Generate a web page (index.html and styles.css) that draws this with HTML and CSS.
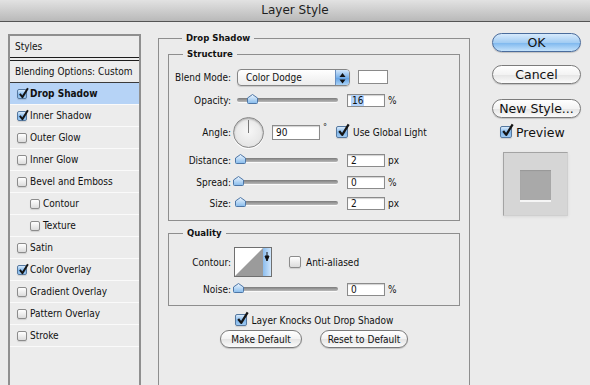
FILE: index.html
```html
<!DOCTYPE html>
<html lang="en">
<head>
    <meta charset="UTF-8">
    <title>Layer Style</title>
    <link rel="stylesheet" href="styles.css">
</head>
<body>
    <svg class="defs" width="0" height="0">
        <defs>
            <linearGradient id="thumbFill" x1="0" y1="0" x2="0" y2="1">
                <stop offset="0" stop-color="#eef6fe"/>
                <stop offset="1" stop-color="#86bbec"/>
            </linearGradient>
        </defs>
    </svg>

    <div class="titlebar">Layer Style</div>

    <div class="dialog">
        <!-- styles list -->
        <div class="styles-list">
            <div class="list-head">Styles</div>
            <div class="list-blend">Blending Options: Custom</div>
            <div class="item selected"><span class="cb on"><svg class="tick" width="11" height="12" viewBox="0 0 12 13"><path d="M2 7.5 L4.8 11 L10.8 1.2"/></svg></span><b>Drop Shadow</b></div>
            <div class="item"><span class="cb on"><svg class="tick" width="11" height="12" viewBox="0 0 12 13"><path d="M2 7.5 L4.8 11 L10.8 1.2"/></svg></span>Inner Shadow</div>
            <div class="item"><span class="cb"></span>Outer Glow</div>
            <div class="item"><span class="cb"></span>Inner Glow</div>
            <div class="item"><span class="cb"></span>Bevel and Emboss</div>
            <div class="item sub"><span class="cb"></span>Contour</div>
            <div class="item sub"><span class="cb"></span>Texture</div>
            <div class="item"><span class="cb"></span>Satin</div>
            <div class="item"><span class="cb on"><svg class="tick" width="11" height="12" viewBox="0 0 12 13"><path d="M2 7.5 L4.8 11 L10.8 1.2"/></svg></span>Color Overlay</div>
            <div class="item"><span class="cb"></span>Gradient Overlay</div>
            <div class="item"><span class="cb"></span>Pattern Overlay</div>
            <div class="item"><span class="cb"></span>Stroke</div>
        </div>

        <!-- drop shadow settings -->
        <fieldset class="group group-main">
            <legend>Drop Shadow</legend>

            <fieldset class="group group-sub structure">
                <legend>Structure</legend>
                <div class="row row-blend">
                    <span class="lbl">Blend Mode:</span>
                    <div class="select">
                        <span class="select-value">Color Dodge</span>
                        <span class="select-arrows"><svg width="13" height="16" viewBox="0 0 13 16"><path d="M3.5 7 L6.5 3 L9.5 7 Z M3.5 9.5 L6.5 13.5 L9.5 9.5 Z"/></svg></span>
                    </div>
                    <span class="color-swatch"></span>
                </div>
                <div class="row row-opacity">
                    <span class="lbl">Opacity:</span>
                    <div class="slider"><span class="thumb" style="left: 10px"><svg width="11" height="10" viewBox="0 0 11 10"><path d="M5.5 .5 L10.5 4 V8.5 Q10.5 9.5 9.5 9.5 H1.5 Q.5 9.5 .5 8.5 V4 Z"/></svg></span></div>
                    <span class="field"><span class="hl">16</span></span>
                    <span class="unit">%</span>
                </div>
                <div class="row row-angle">
                    <span class="lbl">Angle:</span>
                    <span class="dial"></span>
                    <span class="field field-angle">90</span>
                    <span class="deg">°</span>
                    <span class="cb cb-big on"><svg class="tick" width="13" height="14" viewBox="0 0 12 13"><path d="M2 7.5 L4.8 11 L10.8 1.2"/></svg></span>
                    <span class="cb-text">Use Global Light</span>
                </div>
                <div class="row row-distance">
                    <span class="lbl">Distance:</span>
                    <div class="slider"><span class="thumb" style="left: -2px"><svg width="11" height="10" viewBox="0 0 11 10"><path d="M5.5 .5 L10.5 4 V8.5 Q10.5 9.5 9.5 9.5 H1.5 Q.5 9.5 .5 8.5 V4 Z"/></svg></span></div>
                    <span class="field">2</span>
                    <span class="unit">px</span>
                </div>
                <div class="row row-spread">
                    <span class="lbl">Spread:</span>
                    <div class="slider"><span class="thumb" style="left: -4px"><svg width="11" height="10" viewBox="0 0 11 10"><path d="M5.5 .5 L10.5 4 V8.5 Q10.5 9.5 9.5 9.5 H1.5 Q.5 9.5 .5 8.5 V4 Z"/></svg></span></div>
                    <span class="field">0</span>
                    <span class="unit">%</span>
                </div>
                <div class="row row-size">
                    <span class="lbl">Size:</span>
                    <div class="slider"><span class="thumb" style="left: -2px"><svg width="11" height="10" viewBox="0 0 11 10"><path d="M5.5 .5 L10.5 4 V8.5 Q10.5 9.5 9.5 9.5 H1.5 Q.5 9.5 .5 8.5 V4 Z"/></svg></span></div>
                    <span class="field">2</span>
                    <span class="unit">px</span>
                </div>
            </fieldset>

            <fieldset class="group group-sub quality">
                <legend>Quality</legend>
                <div class="row row-contour">
                    <span class="lbl">Contour:</span>
                    <div class="contour">
                        <svg class="contour-curve" width="28" height="28" viewBox="0 0 28 28"><rect width="28" height="28" fill="#fff"/><path d="M0 28 L28 0 V28 Z" fill="#9b9b9b"/></svg>
                        <span class="contour-arrow"><svg width="8" height="28" viewBox="0 0 8 28"><path d="M4 4 V9"/><path d="M2 8 H6 L4 13 Z"/></svg></span>
                    </div>
                    <span class="cb cb-big cb-anti"></span>
                    <span class="cb-text">Anti-aliased</span>
                </div>
                <div class="row row-noise">
                    <span class="lbl">Noise:</span>
                    <div class="slider"><span class="thumb" style="left: -4px"><svg width="11" height="10" viewBox="0 0 11 10"><path d="M5.5 .5 L10.5 4 V8.5 Q10.5 9.5 9.5 9.5 H1.5 Q.5 9.5 .5 8.5 V4 Z"/></svg></span></div>
                    <span class="field">0</span>
                    <span class="unit">%</span>
                </div>
            </fieldset>

            <div class="knock">
                <span class="cb cb-big on"><svg class="tick" width="13" height="14" viewBox="0 0 12 13"><path d="M2 7.5 L4.8 11 L10.8 1.2"/></svg></span>
                <span class="cb-text">Layer Knocks Out Drop Shadow</span>
            </div>
            <div class="defaults">
                <button class="btn btn-small btn-make">Make Default</button>
                <button class="btn btn-small btn-reset">Reset to Default</button>
            </div>
        </fieldset>

        <!-- dialog buttons -->
        <div class="side">
            <button class="btn btn-big btn-ok">OK</button>
            <button class="btn btn-big btn-cancel">Cancel</button>
            <button class="btn btn-big btn-new">New Style...</button>
            <div class="preview">
                <span class="cb cb-big on"><svg class="tick" width="13" height="14" viewBox="0 0 12 13"><path d="M2 7.5 L4.8 11 L10.8 1.2"/></svg></span>
                <span>Preview</span>
            </div>
            <div class="preview-box"><span class="preview-square"></span></div>
        </div>
    </div>
</body>
</html>
```

FILE: styles.css
```css
body {
    margin: 0;
    width: 590px;
    height: 385px;
    overflow: hidden;
    background-color: #ebebeb;
    color: #111;
    font-family: "DejaVu Sans Condensed", "DejaVu Sans", sans-serif;
    font-size: 10px;
}
.defs {
    position: absolute;
}
.titlebar {
    height: 21px;
    line-height: 21px;
    text-align: center;
    font-family: "DejaVu Sans", sans-serif;
    font-size: 12px;
    color: #1e1e1e;
    background: linear-gradient(#e2e2e2, #b9b9b9);
    border-bottom: 1px solid #555;
}
.dialog {
    display: flex;
    align-items: flex-start;
    padding-left: 8px;
}

/* styles list */
.styles-list {
    width: 133px;
    height: 351px;
    margin-top: 12px;
    box-sizing: border-box;
    border: 2px solid #8f8f8f;
    border-bottom: none;
    background-color: #ececec;
}
.list-head,
.list-blend {
    height: 21px;
    line-height: 21px;
    padding-left: 5px;
}
.list-head {
    border-bottom: 4px double #1c1c1c;
}
.list-blend {
    border-bottom: 1px solid #3a3a3a;
}
.item {
    display: flex;
    align-items: center;
    gap: 3px;
    height: 21px;
    padding-left: 7px;
    border-bottom: 1px solid #fafafa;
}
.item.sub {
    padding-left: 20px;
}
.item.selected {
    background-color: #b6d3f6;
}

/* checkboxes */
.cb {
    position: relative;
    flex: none;
    width: 10px;
    height: 10px;
    box-sizing: border-box;
    border: 1px solid #8c8c8c;
    border-radius: 2px;
    background: linear-gradient(#ffffff, #dcdcdc);
    box-shadow: 0 1px 1px rgba(0, 0, 0, 0.12);
}
.cb.on {
    border-color: #55789f;
    background: linear-gradient(#d9ebfc, #7fb5ea 55%, #9fcaf2);
}
.cb-big {
    width: 12px;
    height: 12px;
}
.tick {
    position: absolute;
    left: 0;
    top: -3px;
}
.tick path {
    fill: none;
    stroke: #151515;
    stroke-width: 2.1;
    stroke-linejoin: round;
}
.cb-big .tick {
    top: -4px;
}
.cb-text {
    margin-left: 5px;
}

/* group boxes */
.group {
    margin: 0;
    padding: 0;
    min-width: 0;
    box-sizing: border-box;
    border: 1px solid #8e8e8e;
}
.group legend {
    margin-left: 14px;
    padding: 0 4px;
    line-height: 12px;
    font-weight: bold;
    font-size: 9.5px;
}
.group-main {
    width: 312px;
    height: 353px;
    margin-left: 17px;
    margin-top: 10px;
    padding: 4px 0 0 9px;
    border-bottom: none;
}
.group-sub {
    width: 292px;
}
.structure {
    padding: 8px 0 9px;
}
.quality {
    margin-top: 6px;
    padding: 8px 0 8px;
}

/* rows */
.row {
    display: flex;
    align-items: center;
    height: 16px;
}
.lbl {
    width: 62px;
    margin-right: 6px;
    text-align: right;
    flex: none;
}
.row-blend {
    height: 18px;
}
.row-opacity {
    margin-top: 6px;
}
.row-angle {
    height: 32px;
    margin-top: 8px;
}
.row-distance {
    margin-top: 4px;
}
.row-spread {
    margin-top: 6px;
}
.row-size {
    margin-top: 5px;
}
.row-contour {
    height: 30px;
}
.row-noise {
    margin-top: 4px;
}

/* pop-up menu */
.select {
    display: flex;
    width: 113px;
    height: 17px;
    box-sizing: border-box;
    border: 1px solid #858585;
    border-radius: 4px;
    overflow: hidden;
    background: linear-gradient(#ffffff, #ececec);
    box-shadow: 0 1px 1px rgba(0, 0, 0, 0.15);
}
.select-value {
    flex: 1;
    padding-left: 8px;
    line-height: 15px;
}
.select-arrows {
    width: 13px;
    border-left: 1px solid #6a8fbf;
    background: linear-gradient(#d2e6fa, #79b1ea 50%, #5e9ee2 51%, #a9d2f6);
}
.select-arrows svg {
    display: block;
}
.select-arrows path {
    fill: #111;
}
.color-swatch {
    width: 30px;
    height: 14px;
    margin-left: 8px;
    box-sizing: border-box;
    border: 1px solid #8a8a8a;
    background-color: #fff;
}

/* sliders */
.slider {
    position: relative;
    width: 101px;
    height: 4px;
    margin-right: 9px;
    border-radius: 3px;
    background: linear-gradient(#7b7b7b, #b9b9b9);
    box-shadow: 0 1px 0 #fafafa;
}
.thumb {
    position: absolute;
    top: -4px;
    width: 11px;
    height: 10px;
}
.thumb svg {
    display: block;
}
.thumb path {
    fill: url(#thumbFill);
    stroke: #4d76a6;
}

/* text fields */
.field {
    width: 38px;
    height: 13px;
    box-sizing: border-box;
    padding-left: 3px;
    border: 1px solid #8b8b8b;
    background-color: #fff;
    box-shadow: inset 0 1px 1px rgba(0, 0, 0, 0.18);
    line-height: 11px;
}
.hl {
    background-color: #b3d4fc;
    padding: 0 1px;
}
.unit {
    margin-left: 3px;
}

/* angle */
.dial {
    position: relative;
    width: 31px;
    height: 31px;
    margin-left: -4px;
    box-sizing: border-box;
    border: 1px solid #8a8a8a;
    border-radius: 50%;
    background: radial-gradient(circle at 50% 45%, #f7f7f7, #dedede);
    box-shadow: inset 0 1px 2px rgba(0, 0, 0, 0.3), 0 1px 0 #fff;
}
.dial::after {
    content: "";
    position: absolute;
    left: 14px;
    top: 2px;
    width: 1px;
    height: 13px;
    background-color: #777;
}
.field-angle {
    width: 48px;
    height: 15px;
    margin-left: 8px;
    line-height: 13px;
}
.deg {
    align-self: flex-start;
    margin: 6px 9px 0 3px;
    font-size: 9px;
}

/* contour */
.contour {
    display: flex;
    width: 38px;
    height: 30px;
    margin-left: -3px;
    box-sizing: border-box;
    border: 1px solid #6f6f6f;
}
.contour-curve {
    display: block;
}
.contour-arrow {
    width: 8px;
    background: linear-gradient(90deg, #8bbdee, #d0e6fb);
}
.contour-arrow svg {
    display: block;
}
.contour-arrow path {
    fill: #111;
    stroke: #111;
    stroke-width: 1;
}
.cb-anti {
    margin-left: 17px;
}

/* bottom of panel */
.knock {
    display: flex;
    align-items: center;
    justify-content: center;
    height: 14px;
    margin-top: 7px;
    margin-left: -9px;
}
.knock .cb-text {
    margin-left: 5px;
}
.defaults {
    display: flex;
    justify-content: center;
    gap: 18px;
    margin-top: 3px;
    margin-left: -9px;
}

/* buttons */
.btn {
    margin: 0;
    padding: 0;
    box-sizing: border-box;
    border: 1px solid #7b7b7b;
    color: #111;
    text-align: center;
    background: linear-gradient(#ffffff, #f3f3f3 50%, #e4e4e4 51%, #fbfbfb);
    box-shadow: 0 1px 1px rgba(0, 0, 0, 0.18);
    cursor: pointer;
}
.btn-small {
    height: 18px;
    border-radius: 9px;
    font-family: "DejaVu Sans Condensed", "DejaVu Sans", sans-serif;
    font-size: 10px;
}
.btn-make {
    width: 82px;
}
.btn-reset {
    width: 88px;
}
.side {
    display: flex;
    flex-direction: column;
    width: 89px;
    margin-left: 22px;
    margin-top: 11px;
}
.btn-big {
    height: 19px;
    border-radius: 10px;
    font-family: "DejaVu Sans", sans-serif;
    font-size: 12.5px;
}
.btn-ok {
    border-color: #4a6c9c;
    background: linear-gradient(#d7eafc, #a3cdf3 50%, #7bb6ee 51%, #c4e2fb);
}
.btn-cancel {
    margin-top: 13px;
}
.btn-new {
    margin-top: 15px;
}
.preview {
    display: flex;
    align-items: center;
    gap: 4px;
    height: 14px;
    margin-top: 7px;
    margin-left: 8px;
    font-family: "DejaVu Sans", sans-serif;
    font-size: 12.5px;
}
.preview-box {
    display: flex;
    align-items: center;
    justify-content: center;
    width: 65px;
    height: 64px;
    margin-top: 13px;
    margin-left: 11px;
    box-sizing: border-box;
    border: 1px solid #a3a3a3;
    border-right-color: #cfcfcf;
    border-bottom-color: #cfcfcf;
    background-color: #d6d6d6;
    box-shadow: 0 1px 3px rgba(0, 0, 0, 0.08);
}
.preview-square {
    width: 31px;
    height: 30px;
    margin-top: 2px;
    background-color: #a9a9a9;
    box-shadow: 0 2px 0 #f6f6f6, inset 0 1px 1px rgba(0, 0, 0, 0.1);
}
```
